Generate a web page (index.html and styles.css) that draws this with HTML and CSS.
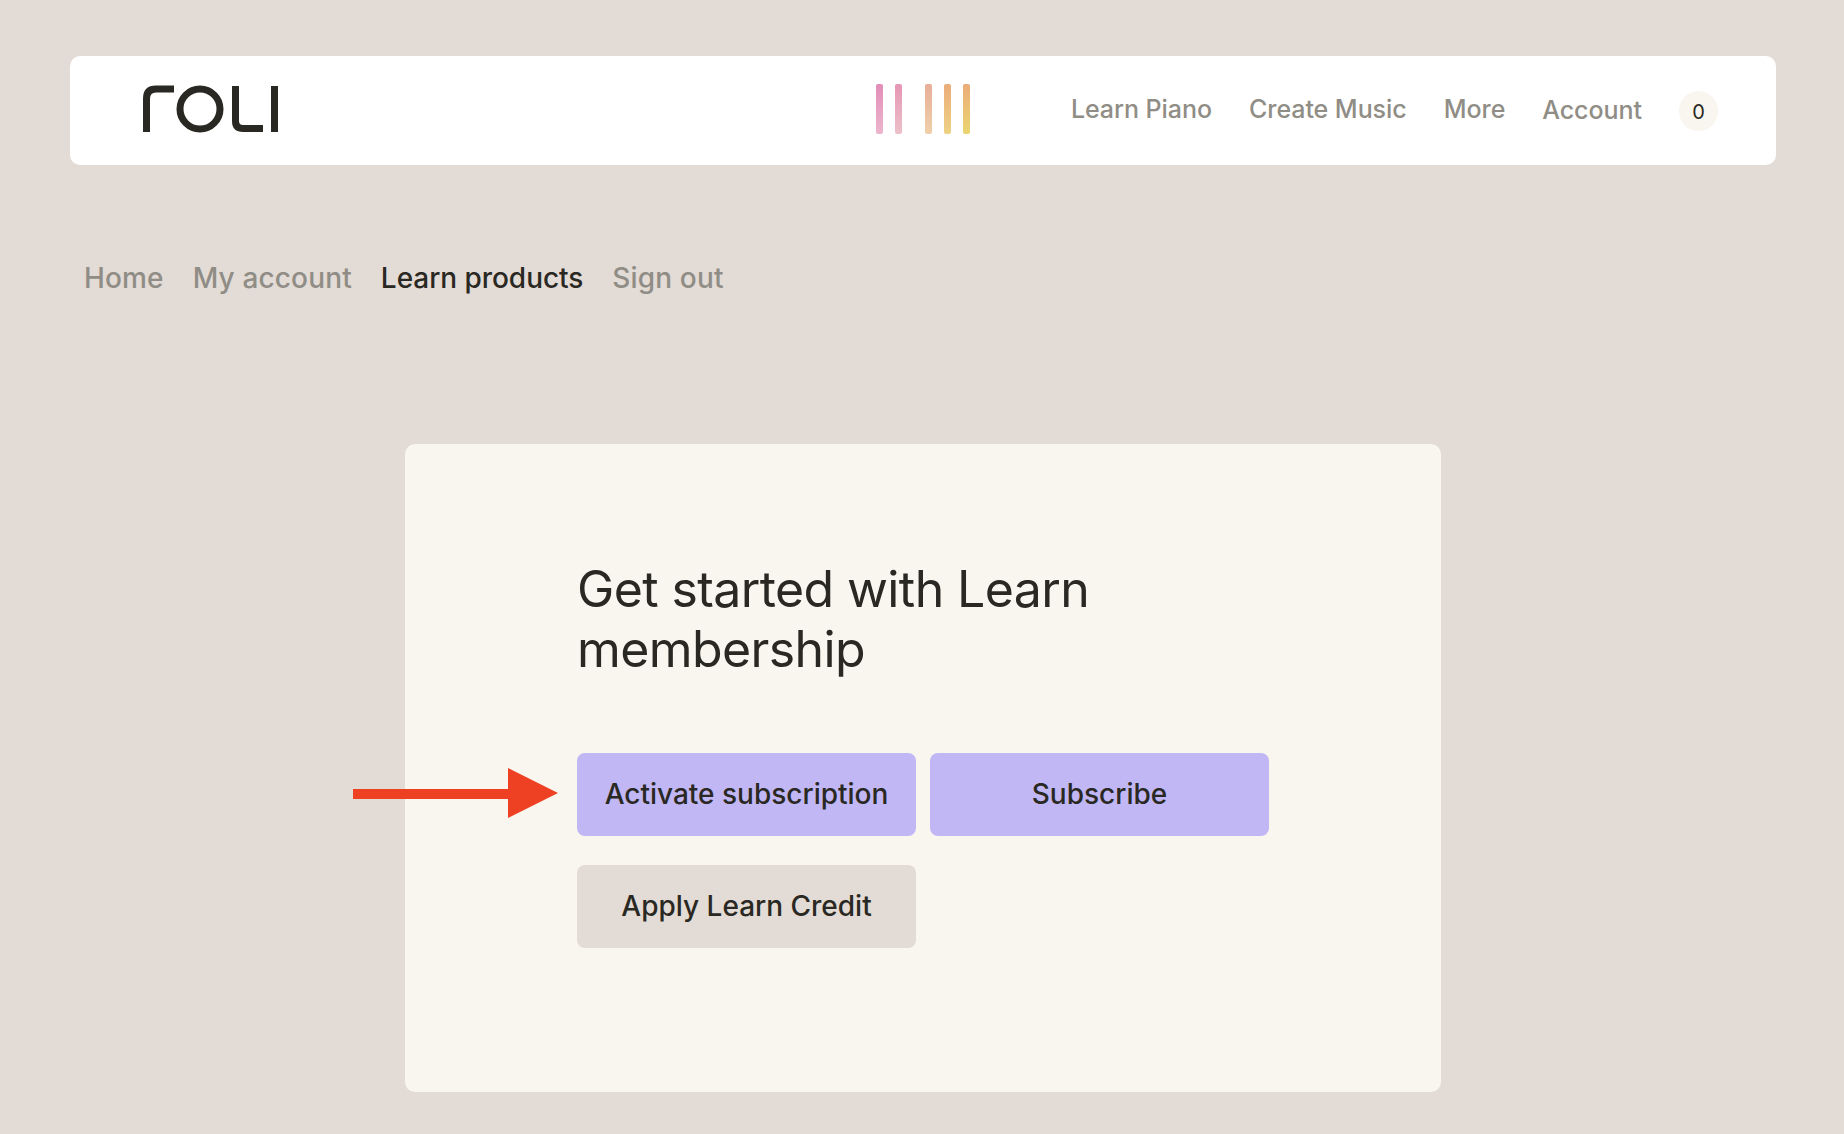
FILE: index.html
```html
<!DOCTYPE html>
<html lang="en">
<head>
  <meta charset="UTF-8">
  <title>ROLI - Learn products</title>
  <link rel="stylesheet" href="styles.css">
</head>
<body>

<header class="site-header">
  <a class="logo" href="#" aria-label="ROLI">
    <svg width="136" height="48" viewBox="0 0 136 48" fill="none" stroke="#2a2823" stroke-width="7">
      <path d="M3.5 47V13.5Q3.5 4 13 4H31"/>
      <circle cx="57" cy="24" r="20"/>
      <path d="M92.5 1V36Q92.5 43.500 100 43.500H120"/>
      <path d="M131.500 1V47"/>
    </svg>
  </a>
  <div class="bars">
    <span class="bar bar-1"></span>
    <span class="bar bar-2"></span>
    <span class="bar bar-3"></span>
    <span class="bar bar-4"></span>
    <span class="bar bar-5"></span>
  </div>
  <nav class="main-nav">
    <a href="#">Learn Piano</a>
    <a href="#">Create Music</a>
    <a href="#">More</a>
    <a class="account" href="#">Account</a>
    <span class="cart-count">0</span>
  </nav>
</header>

<nav class="account-nav">
  <a href="#">Home</a>
  <a href="#">My account</a>
  <a class="active" href="#">Learn products</a>
  <a href="#">Sign out</a>
</nav>

<main class="card-wrap">
  <!-- Annotation arrow sits over the card edge -->
  <svg class="arrow" width="205" height="50" viewBox="0 0 205 50">
    <path d="M0 21H155V0L205 25L155 50V31H0Z" fill="#ee4023"/>
  </svg>
  <section class="card">
    <h1>Get started with Learn membership</h1>
    <div class="actions">
      <a class="btn btn-primary" href="#">Activate subscription</a>
      <a class="btn btn-primary" href="#">Subscribe</a>
      <a class="btn btn-muted" href="#">Apply Learn Credit</a>
    </div>
  </section>
</main>

</body>
</html>
```

FILE: styles.css
```css
* {
  box-sizing: border-box;
  margin: 0;
  padding: 0;
  font-family: Inter, "Liberation Sans", sans-serif;
}

body {
  background: #e3dbd5;
  padding: 56px 68px 43px 70px;
  color: #2a2823;
}

a {
  text-decoration: none;
  color: inherit;
}

.site-header {
  display: flex;
  align-items: center;
  height: 109px;
  padding: 0 58px 0 73px;
  background: #fff;
  border-radius: 10px;
}

.logo {
  display: flex;
  margin-top: -3px;
}

.bars {
  display: flex;
  height: 50px;
  margin-left: 597px;
  margin-top: -3px;
}

.bar {
  width: 7px;
  border-radius: 2px;
  margin-right: 12px;
}

.bar-1 { background: linear-gradient(#e28db8, #ecb6cd); }
.bar-2 { background: linear-gradient(#e596b5, #ecc0c9); }
.bar-3 { background: linear-gradient(#e8ae98, #efd0a9); margin-left: 11px; }
.bar-4 { background: linear-gradient(#ebac7b, #eed283); }
.bar-5 { background: linear-gradient(#ebac78, #ebd56f); margin-right: 0; }

.main-nav {
  display: flex;
  align-items: center;
  margin-left: auto;
  font-size: 25px;
  font-weight: 500;
  letter-spacing: -0.05px;
  color: #8f8d85;
}

.main-nav a {
  margin-right: 37px;
  margin-top: -3px;
}

.main-nav .account {
  margin-top: -1px;
}

.cart-count {
  display: flex;
  align-items: center;
  justify-content: center;
  width: 39px;
  height: 40px;
  padding-top: 2px;
  border-radius: 50%;
  background: #f9f6ef;
  color: #2a2823;
  font-size: 20px;
  font-weight: 400;
  letter-spacing: 0;
}

.account-nav {
  display: flex;
  gap: 29px;
  margin-top: 96px;
  padding-left: 14px;
  font-size: 28px;
  font-weight: 500;
  letter-spacing: 0.15px;
  color: #8f8d85;
}

.account-nav .active {
  color: #2a2823;
  font-weight: 550;
  letter-spacing: -0.05px;
}

.card-wrap {
  position: relative;
  display: flex;
  justify-content: center;
  margin-top: 149px;
}

.card {
  width: 1036px;
  height: 648px;
  padding: 115px 172px 0;
  background: #f9f6ef;
  border-radius: 10px;
}

h1 {
  font-size: 50px;
  font-weight: 400;
  line-height: 60px;
  letter-spacing: -0.6px;
  width: 600px;
}

.actions {
  display: grid;
  grid-template-columns: 339px 339px;
  gap: 29px 14px;
  margin-top: 74px;
}

.btn {
  display: flex;
  align-items: center;
  justify-content: center;
  height: 83px;
  padding-bottom: 2px;
  border-radius: 8px;
  font-size: 28px;
  font-weight: 550;
  letter-spacing: 0;
}

.btn-primary {
  background: #c1b7f4;
}

.btn-muted {
  background: #e3dbd5;
}

.arrow {
  position: absolute;
  left: 283px;
  top: 324px;
}
```
